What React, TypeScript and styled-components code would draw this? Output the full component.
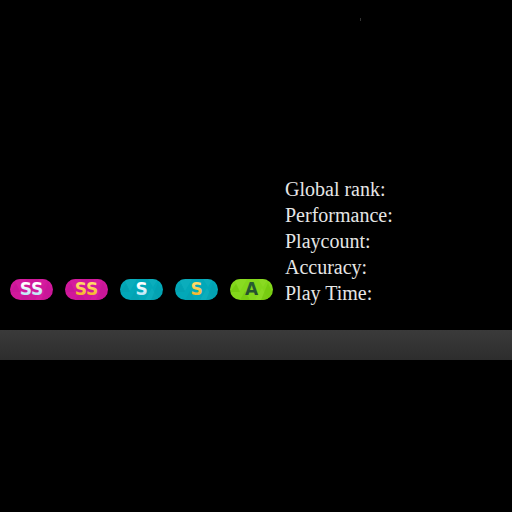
import React from "react";
import styled, { createGlobalStyle } from "styled-components";

const GlobalStyle = createGlobalStyle`
  body {
    margin: 0;
    background: #000;
    color: #e6e6e6;
    font-family: "Liberation Serif", serif;
  }
`;

const Page = styled.main`
  min-height: 100vh;
  background: #000;
`;

const Header = styled.header`
  display: flex;
  justify-content: center;
  height: 158px;
  padding: 18px 0 0 209px;
`;

const Tick = styled.span`
  width: 1px;
  height: 3px;
  background: #333;
`;

const Profile = styled.section`
  display: flex;
  align-items: flex-end;
  gap: 12px;
  padding: 0 10px 24px;
`;

const Grades = styled.div`
  display: flex;
  flex-shrink: 0;
  gap: 12px;
  padding-bottom: 6px;
`;

const Badge = styled.svg`
  display: block;
  width: 43px;
  height: 21px;
  font-family: "DejaVu Sans", sans-serif;
  font-size: 17px;
  font-weight: 700;
`;

const Stats = styled.ul`
  margin: 0;
  padding: 0;
  list-style: none;
`;

const Stat = styled.li`
  font-size: 20px;
  line-height: 26px;
  white-space: nowrap;
`;

const Bar = styled.div`
  height: 30px;
  background: linear-gradient(#3a3a3a, #2d2d2d);
`;

type Grade = {
  id: string;
  letters: string;
  label: string;
  base: string;
  light: string;
  dark: string;
  top: string;
  bottom: string;
};

const magenta = { base: "#d0189b", light: "#d81ea2", dark: "#c41696" };
const teal = { base: "#02a8b8", light: "#12b0be", dark: "#059eae" };
const lime = { base: "#83d71b", light: "#90dc28", dark: "#70c40b" };
const silver = { top: "#ffffff", bottom: "#b9e5f5" };
const gold = { top: "#ffd966", bottom: "#f5b52c" };

const grades: Grade[] = [
  { id: "xh", letters: "SS", label: "Silver SS", ...magenta, ...silver },
  { id: "x", letters: "SS", label: "Gold SS", ...magenta, ...gold },
  { id: "sh", letters: "S", label: "Silver S", ...teal, ...silver },
  { id: "s", letters: "S", label: "Gold S", ...teal, ...gold },
  { id: "a", letters: "A", label: "A", ...lime, top: "#285b32", bottom: "#244e2e" },
];

const stats = ["Global rank:", "Performance:", "Playcount:", "Accuracy:", "Play Time:"];

function GradeBadge({ grade }: { grade: Grade }) {
  const clip = `${grade.id}-clip`;
  const fill = `${grade.id}-fill`;
  return (
    <Badge viewBox="0 0 43 21" role="img" aria-label={grade.label}>
      <defs>
        <clipPath id={clip}>
          <rect width="43" height="21" rx="10.5" />
        </clipPath>
        <linearGradient id={fill} x1="0" y1="0" x2="0" y2="1">
          <stop offset="0.3" stopColor={grade.top} />
          <stop offset="0.8" stopColor={grade.bottom} />
        </linearGradient>
      </defs>
      <g clipPath={`url(#${clip})`}>
        <rect width="43" height="21" fill={grade.base} />
        <path d="M4 0h13l-7 12zM25 21l7-12 7 12zM28 0h10l-5 8z" fill={grade.light} opacity="0.6" />
        <path d="M31 21l7-17 8 17zM10 21l5-9 5 9zM0 13l6-8 4 8z" fill={grade.dark} opacity="0.6" />
      </g>
      <text x="21.5" y="16" textAnchor="middle" fill={`url(#${fill})`}>
        {grade.letters}
      </text>
    </Badge>
  );
}

export default function App() {
  return (
    <>
      <GlobalStyle />
      <Page>
        <Header>
          <Tick />
        </Header>
        <Profile>
          <Grades>
            {grades.map((grade) => (
              <GradeBadge key={grade.id} grade={grade} />
            ))}
          </Grades>
          <Stats>
            {stats.map((stat) => (
              <Stat key={stat}>{stat}</Stat>
            ))}
          </Stats>
        </Profile>
        <Bar />
      </Page>
    </>
  );
}
